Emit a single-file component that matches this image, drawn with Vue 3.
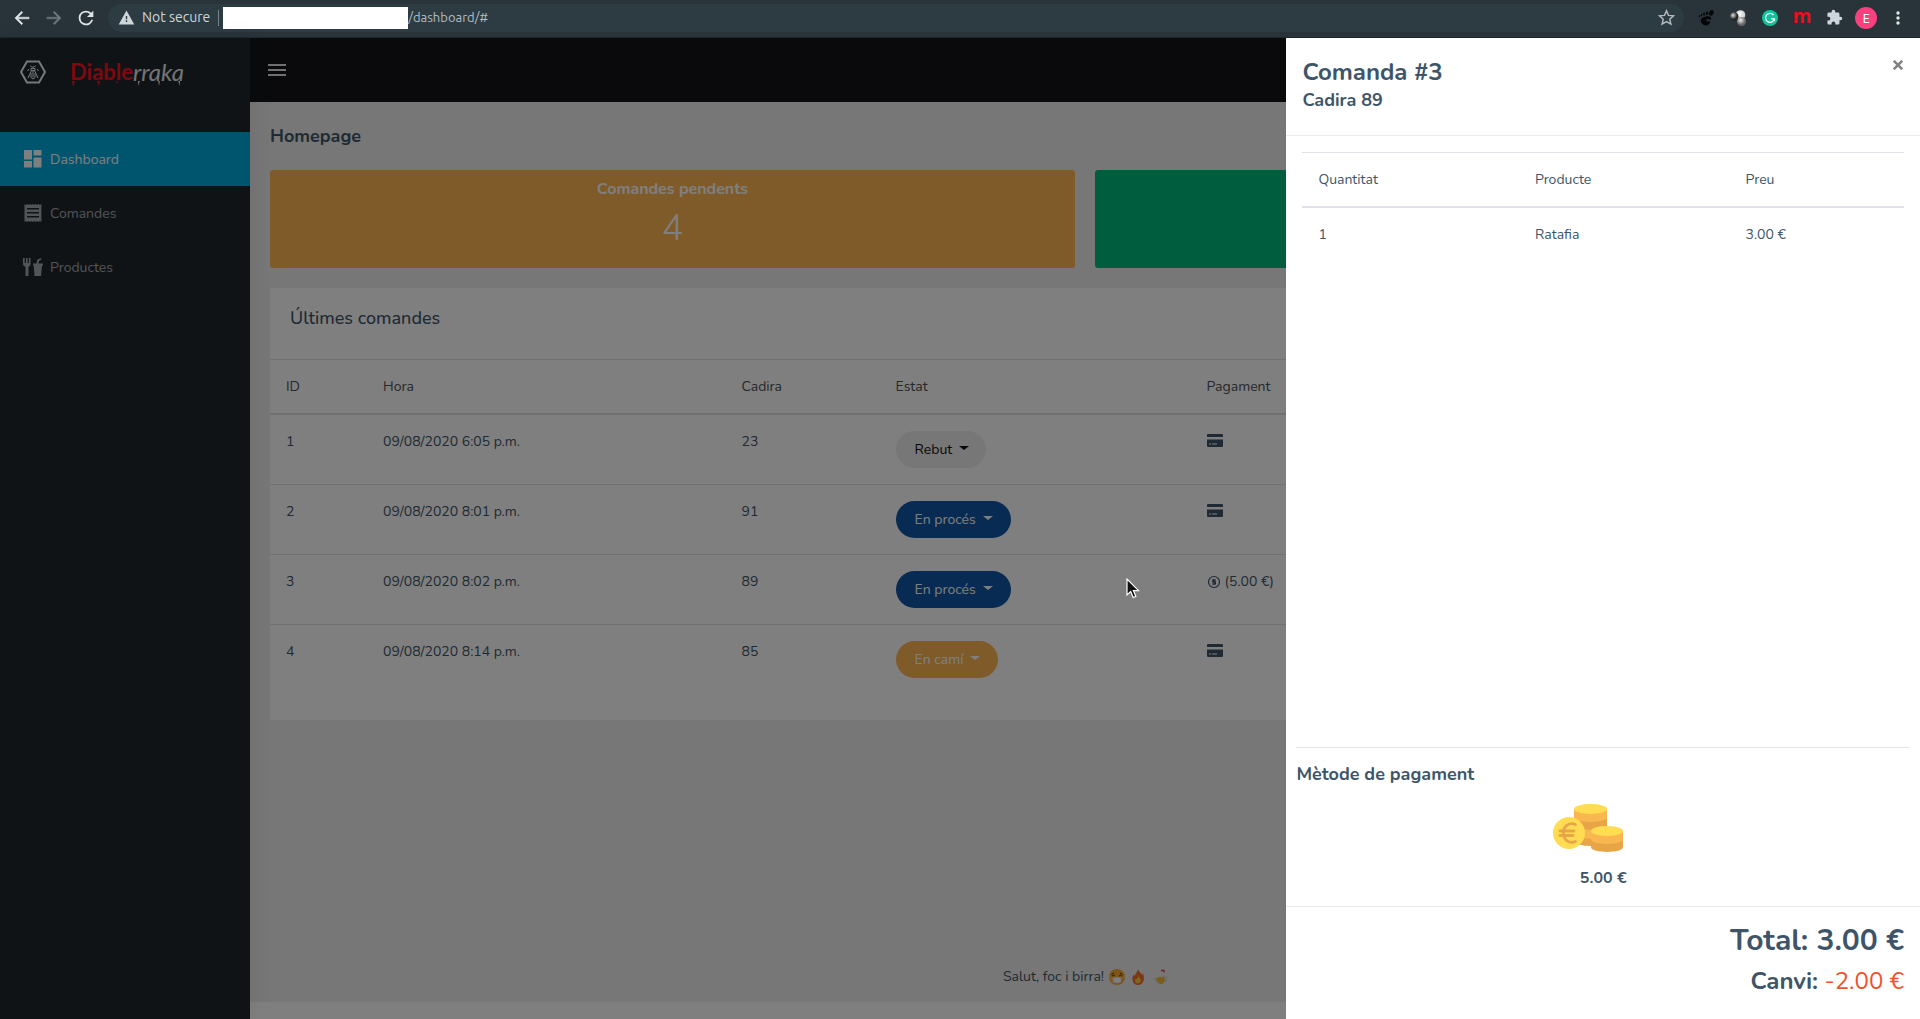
<script setup>
const orders = [
  { id: 1, time: '09/08/2020 6:05 p.m.', seat: 23, state: 'Rebut', tone: 'received' },
  { id: 2, time: '09/08/2020 8:01 p.m.', seat: 91, state: 'En procés', tone: 'progress' },
  { id: 3, time: '09/08/2020 8:02 p.m.', seat: 89, state: 'En procés', tone: 'progress', cash: '(5.00 €)' },
  { id: 4, time: '09/08/2020 8:14 p.m.', seat: 85, state: 'En camí', tone: 'sent' },
]
</script>

<template>
  <div class="window">
    <header class="browser">
      <button class="tool" aria-label="Back">
        <svg viewBox="0 0 24 24" width="20" height="20" fill="#dfe6ea"><path d="M20.500 11H7.300l5.600-5.600L11.500 4l-8 8 8 8 1.400-1.400L7.300 13h13.200z" stroke="#dfe6ea" stroke-width=".6" /></svg>
      </button>
      <button class="tool" aria-label="Forward">
        <svg viewBox="0 0 24 24" width="20" height="20" fill="#6d787e"><path d="M3.500 11h13.200l-5.600-5.600L12.500 4l8 8-8 8-1.400-1.400 5.600-5.600H3.500z" stroke="#6d787e" stroke-width=".6" /></svg>
      </button>
      <button class="tool" aria-label="Reload">
        <svg viewBox="0 0 24 24" width="22" height="22" fill="#dfe6ea"><path d="M17.650 6.350A7.950 7.950 0 0 0 12 4a8 8 0 1 0 7.730 10h-2.080A6 6 0 1 1 12 6c1.660 0 3.140.69 4.220 1.780L13 11h7V4z" /></svg>
      </button>
      <div class="address">
        <svg class="warn" viewBox="0 0 24 24" width="17" height="17" fill="#cfd6da"><path d="M1 22h22L12 2zM13 18.500h-2v-2.500h2zm0-4h-2V10h2z" fill-rule="evenodd" /></svg>
        <span class="insecure">Not secure</span>
        <span class="divider"></span>
        <span class="mask"></span>
        <span class="path">/dashboard/#</span>
        <button class="star" aria-label="Bookmark">
          <svg viewBox="0 0 24 24" width="17" height="17" fill="none" stroke="#b4bcc0" stroke-width="2"><path d="M12 2.500l2.800 6.500 7.200.7-5.400 4.700 1.600 7L12 17.700l-6.200 3.700 1.600-7L2 9.700 9.200 9z" /></svg>
        </button>
      </div>
      <div class="extensions">
        <svg viewBox="0 0 24 24" width="16" height="16" fill="#050607">
          <path d="M11 10c5-1.200 9-.2 8.500 3-.4 2.200-3 2-3.500.8-.6-1.300-3-1-3.300 1.200-.2 2 1.300 3 2.800 2.200 1.500-.8 3.200-.2 2.500 1.600-1 3-4 4.700-7 4.200C7.500 22.500 4.500 19.500 4.200 16c-.2-3 2.500-5.200 6.800-6z" />
          <ellipse cx="20" cy="4.200" rx="3.200" ry="4.400" transform="rotate(25 20 4.200)" /><ellipse cx="13.500" cy="4.800" rx="1.700" ry="2.800" /><ellipse cx="9" cy="6" rx="1.400" ry="2.300" /><ellipse cx="5.200" cy="7.500" rx="1.200" ry="2" /><ellipse cx="2" cy="9.500" rx="1" ry="1.600" />
        </svg>
        <svg viewBox="0 0 16 16" width="16" height="16">
          <defs>
            <radialGradient id="ballDark" cx=".35" cy=".35"><stop offset="0" stop-color="#ddd" /><stop offset="1" stop-color="#222" /></radialGradient>
            <radialGradient id="ballLight" cx=".4" cy=".4"><stop offset="0" stop-color="#fff" /><stop offset="1" stop-color="#d0d0d0" /></radialGradient>
            <radialGradient id="ballGrey" cx=".4" cy=".35"><stop offset="0" stop-color="#eee" /><stop offset="1" stop-color="#666" /></radialGradient>
          </defs>
          <circle cx="10.500" cy="5" r="4.800" fill="url(#ballLight)" /><circle cx="11.500" cy="11.500" r="4.500" fill="url(#ballGrey)" /><circle cx="4.300" cy="6.500" r="4.200" fill="url(#ballDark)" />
        </svg>
        <svg viewBox="0 0 16 16" width="16" height="16"><circle cx="8" cy="8" r="8" fill="#0fc39a" /><path d="M11.500 5A4.500 4.500 0 1 0 12.400 8.900H9M12.400 8.900v2.400" fill="none" stroke="#fff" stroke-width="1.300" /></svg>
        <span class="ext-m">m</span>
        <svg viewBox="0 0 24 24" width="17" height="17" fill="#cdd6dc"><path d="M20.500 11H19V7a2 2 0 0 0-2-2h-4V3.500a2.500 2.500 0 0 0-5 0V5H4a2 2 0 0 0-2 2v3.800h1.500a2.700 2.700 0 0 1 0 5.400H2V20a2 2 0 0 0 2 2h3.800v-1.500a2.700 2.700 0 0 1 5.400 0V22H17a2 2 0 0 0 2-2v-4h1.500a2.500 2.500 0 0 0 0-5z" /></svg>
        <span class="avatar">E</span>
        <svg viewBox="0 0 16 16" width="16" height="16" fill="#dfe6ea"><circle cx="8" cy="3" r="1.700" /><circle cx="8" cy="8" r="1.700" /><circle cx="8" cy="13" r="1.700" /></svg>
      </div>
    </header>

    <div class="app">
      <aside class="sidebar">
        <div class="brand">
          <svg viewBox="0 0 26 24" width="26" height="24" fill="none" stroke="#f0f0f0">
            <path d="M7 1.500h12L25 12l-6 10.500H7L1 12z" stroke-width="2" />
            <path d="M10.500 5.500l1 1.500h3l1-1.500M11 8.500h4v2h-4zM11.500 10.500L8.500 17M14.500 10.500l3 6.500M13 10.500v7M11 13v4.500l2 1.500 2-1.500V13M9 9l-1.500 2M17 9l1.500 2M9 16l-1 2M17 16l1 2" stroke-width="1" />
          </svg>
          <a href="#" class="wordmark">
            <b>Diable</b><i>rraka</i>
            <svg class="drips" viewBox="0 0 114 6" width="114" height="6"><path d="M2 0h3L3 6zM27 0h3l-1 5zM46 0h2l-1 3z" fill="#f5141f" /><path d="M68 0h2l-2 5zM88 0h2l-1 5zM108 0h2v5z" fill="#d8d8d8" /></svg>
          </a>
        </div>
        <nav>
          <a href="#" class="item active">
            <svg viewBox="0 0 18 18" width="18" height="18" fill="currentColor"><path d="M0 0h8v9.500H0zM9.500 0h8v5.500h-8zM0 11h8v6.500H0zM9.500 7.500h8v10h-8z" /></svg>
            Dashboard
          </a>
          <a href="#" class="item">
            <svg viewBox="0 0 18 18" width="18" height="18" fill="currentColor"><path fill-rule="evenodd" d="M.5 0l1.400 1 1.400-1 1.400 1 1.400-1 1.400 1 1.400-1 1.400 1 1.400-1 1.400 1 1.400-1 1.400 1 1.500-1v18l-1.500-1-1.400 1-1.400-1-1.400 1-1.400-1-1.400 1-1.400-1-1.400 1-1.400-1-1.400 1-1.400-1-1.400 1zM3 4v1.500h12V4zm0 4v1.500h12V8zm0 4v1.500h12V12z" /></svg>
            Comandes
          </a>
          <a href="#" class="item">
            <svg class="wide" viewBox="0 0 20 18" width="20" height="18" fill="currentColor"><path d="M0 0h1.700v5h1.200V0h1.700v5h1.200V0h1.700v6c0 1.500-.8 2.300-2 2.800V18H2.500V8.800C1 8.300 0 7.500 0 6zM10 5.500h3.500l.6-3.500L17.500 0l1 1.500-2.500 1.400-.5 2.600H20v2h-1L18 18h-6.500L10.700 7.500H10z" /></svg>
            Productes
          </a>
        </nav>
      </aside>

      <div class="page">
        <div class="topbar">
          <button class="burger" aria-label="Menu"><span></span><span></span><span></span></button>
        </div>
        <main>
          <h1>Homepage</h1>
          <div class="stats">
            <section class="stat pending">
              <h2>Comandes pendents</h2>
              <p>4</p>
            </section>
            <section class="stat done"></section>
          </div>
          <section class="card">
            <h2>Últimes comandes</h2>
            <table class="orders">
              <colgroup><col class="c-id" /><col class="c-time" /><col class="c-seat" /><col class="c-state" /><col /></colgroup>
              <thead>
                <tr><th>ID</th><th>Hora</th><th>Cadira</th><th>Estat</th><th>Pagament</th></tr>
              </thead>
              <tbody>
                <tr v-for="order in orders" :key="order.id">
                  <td>{{ order.id }}</td>
                  <td>{{ order.time }}</td>
                  <td>{{ order.seat }}</td>
                  <td><button class="state" :class="order.tone">{{ order.state }}</button></td>
                  <td>
                    <span v-if="order.cash" class="cash">
                      <svg viewBox="0 0 14 14" width="14" height="14" fill="none" stroke="currentColor"><circle cx="7" cy="7" r="5.500" stroke-width="1.200" /><path d="M9 5H5.800v1.800h2.600V9H5M7 4v6" stroke-width="1.200" /></svg>
                      {{ order.cash }}
                    </span>
                    <svg v-else class="creditcard" viewBox="0 0 16 13" width="16" height="13" fill="currentColor"><path fill-rule="evenodd" d="M1 0h14a1 1 0 0 1 1 1v2H0V1a1 1 0 0 1 1-1zM0 5.500h16V12a1 1 0 0 1-1 1H1a1 1 0 0 1-1-1zM2 9.500v1h2v-1zm3 0v1h5v-1z" /></svg>
                  </td>
                </tr>
              </tbody>
            </table>
          </section>
        </main>
        <footer class="foot">
          <span>Salut, foc i birra!</span>
          <svg viewBox="0 0 16 16" width="16" height="16"><circle cx="8" cy="8" r="8" fill="#ffa82e" /><path d="M2.500 5.500l2.500-1.500M13.500 5.500L11 4M3 7q1.500-1.500 3 0M10 7q1.500-1.500 3 0" stroke="#5b3410" fill="none" /><path d="M4 9q4-1.500 8 0v4q-4 2-8 0zM4 9.500L.5 8M12 9.500L15.500 8" fill="#fff" stroke="#ddd" stroke-width=".8" /></svg>
          <svg viewBox="0 0 16 16" width="16" height="16"><path d="M8 0c.5 3 3.500 3.500 4 6l1-1.500C15 8.500 14 16 8 16S1.500 9 3.500 5.500l.8 2C4.800 5 7.500 3.500 8 0z" fill="#f4702a" /><path d="M8.500 6c0 2.500 2.800 3.500 2.300 6s-5 3.500-5.600.5c-.3-1.500.3-2.500.8-3l.8 1C7.200 9 8.500 8.500 8.500 6z" fill="#ffcf3f" /></svg>
          <svg viewBox="0 0 16 16" width="16" height="16"><path d="M4.500 6.500l8 0 2 5.500-4 3.500-4.500-2z" fill="#f0bd35" /><path d="M0 7l3-4.500 3-1L9 2.500l3 1 1.500 3-2.500 2-2.500-1-2 1.500-1.500-.5L3 9.500z" fill="#eee" /><path d="M13 6.500l2.500 2v3l-2.500 1.500M2.500 9l4.500 5" fill="none" stroke="#d8d8d8" stroke-width="1.300" /><path d="M10 1.500h3v2" fill="none" stroke="#e44" stroke-width="1.300" /></svg>
        </footer>
      </div>

      <div class="backdrop"></div>
      <svg class="pointer" viewBox="0 0 14 21" width="14" height="21"><path d="M1 1v16l3.700-3.400L7.200 19.500l2.700-1.100-2.500-5.700H12.600z" fill="#111" stroke="#fff" stroke-width="1.200" /></svg>

      <aside class="drawer">
        <header>
          <h2>Comanda #3</h2>
          <h3>Cadira 89</h3>
          <button class="close" aria-label="Close">
            <svg viewBox="0 0 10 10" width="10" height="10" stroke="#7f7f7f" stroke-width="2.500"><path d="M.8.8l8.400 8.400M9.200.8L.8 9.200" /></svg>
          </button>
        </header>
        <div class="lines">
          <table>
            <colgroup><col class="c-qty" /><col class="c-product" /><col /></colgroup>
            <thead><tr><th>Quantitat</th><th>Producte</th><th>Preu</th></tr></thead>
            <tbody><tr><td>1</td><td>Ratafia</td><td>3.00 €</td></tr></tbody>
          </table>
        </div>
        <section class="payment">
          <h3>Mètode de pagament</h3>
          <svg viewBox="0 0 70 48" width="70" height="48">
            <path d="M21 5v32q4 5 17 5t16-5V5z" fill="#e8a548" />
            <path d="M21 5v8c0 6.500 33 6.500 33 0V5zM21 24v7q8 4 17 3.500V26z" fill="#f9b84f" />
            <ellipse cx="37.500" cy="5" rx="16.500" ry="5" fill="#ffdc52" />
            <path d="M38 27v16c0 6.500 32 6.500 32 0V27z" fill="#e8a548" />
            <path d="M38 27v8c0 6.500 32 6.500 32 0v-8z" fill="#f9b84f" />
            <ellipse cx="54" cy="27" rx="16" ry="5" fill="#ffdc52" />
            <circle cx="16" cy="29" r="16" fill="#ffdc52" />
            <path d="M22.500 20.500C16 18 10.500 22 10.500 29s5.500 11 12 8.500M7 27h14M7 31.500h13" fill="none" stroke="#e8a548" stroke-width="2.800" stroke-linecap="round" />
          </svg>
          <p>5.00 €</p>
        </section>
        <footer>
          <p class="total">Total: 3.00 €</p>
          <p class="change">Canvi: <span>-2.00 €</span></p>
        </footer>
      </aside>
    </div>
  </div>
</template>

<style>
body { margin: 0; }
</style>

<style scoped>
* { box-sizing: border-box; }
h1, h2, h3, p { margin: 0; }
button { border: 0; padding: 0; background: none; font: inherit; }
a { text-decoration: none; }
svg { display: block; flex: none; }
.window {
  display: flex;
  flex-direction: column;
  min-height: 100vh;
  font-family: Nunito, Lato, sans-serif;
  font-size: 14px;
  line-height: 21px;
  color: #3e5569;
}

.browser {
  display: flex;
  align-items: center;
  height: 38px;
  padding: 0 6px 2px;
  background: #28343a;
  border-bottom: 1px solid #1d272c;
  font-family: Ubuntu, "Noto Sans", sans-serif;
  font-size: 14px;
}
.tool { display: grid; place-items: center; width: 32px; height: 28px; }
.address {
  flex: 1;
  display: flex;
  align-items: center;
  height: 28px;
  margin-left: 6px;
  padding: 0 9px 0 10px;
  border-radius: 14px;
  background: #2d3c43;
  color: #b4bcc0;
}
.insecure { margin-left: 7px; color: #cfd6da; }
.divider { width: 1px; height: 16px; margin: 0 4px 0 8px; background: #77828a; }
.mask { width: 185px; height: 22px; background: #fff; }
.path { font-size: 13px; }
.star { margin-left: auto; }
.extensions { display: grid; grid-template-columns: repeat(7, 32px); place-items: center; margin-left: 6px; height: 28px; }
.ext-m { font: bold 19px/20px "Open Sans", sans-serif; color: #f00c1e; height: 24px; }
.avatar { width: 22px; height: 22px; border-radius: 50%; background: #f9407e; color: #fff; font: 13px/22px "Open Sans", sans-serif; text-align: center; }

.app { position: relative; flex: 1; display: flex; }
.sidebar { width: 250px; background: #1f262d; box-shadow: 1px 0 20px rgba(0, 0, 0, .08); z-index: 1; }
.brand { display: flex; align-items: center; height: 64px; padding: 3px 20px 0; gap: 24px; }
.wordmark { position: relative; display: flex; font: 24px/30px Lato, "Liberation Sans", sans-serif; color: #e8e8e8; }
.wordmark b { color: #f5141f; font-size: 22px; }
.drips { position: absolute; left: 0; bottom: 0; }
nav { padding-top: 30px; }
.item { display: flex; align-items: center; gap: 8px; height: 54px; padding-left: 24px; color: #a5a8ab; }
.item.active { background: #00aadd; color: #fff; }
.item .wide { margin: 0 -1px; }

.page { flex: 1; display: flex; flex-direction: column; background: #eee; border-bottom: 17px solid #fff; }
.topbar { height: 64px; padding: 26px 18px; background: #141518; }
.burger { display: flex; flex-direction: column; gap: 3px; }
.burger span { width: 18px; height: 2px; background: #e0e0e0; }
main { padding: 20px; }
h1 { font-size: 18px; line-height: 28px; font-weight: 700; }
.stats { display: grid; grid-template-columns: 1fr 1fr; gap: 20px; margin-top: 20px; }
.stat { height: 98px; padding-top: 8px; border-radius: 3px; text-align: center; color: #fff; }
.stat h2 { font-size: 16px; line-height: 22px; font-weight: 700; }
.stat p { font-size: 36px; line-height: 58px; font-weight: 300; }
.pending { background: #ffb654; }
.done { background: #00ba7b; }
.card { margin-top: 20px; padding-bottom: 26px; background: #fff; }
.card h2 { padding: 16px 20px 27px; font-size: 18px; line-height: 28px; font-weight: 500; }
table { width: 100%; border-collapse: separate; border-spacing: 0; table-layout: fixed; }
th, td { padding: 16px; border-top: 1px solid #dee2e6; text-align: left; vertical-align: top; font-weight: 400; }
th { border-bottom: 2px solid #dee2e6; }
.orders th { color: #4f5052; }
tbody tr:first-child td { border-top: 0; }
.c-id { width: 97px; }
.c-time { width: 22%; }
.c-seat { width: 154px; }
.c-state { width: 311px; }
.state { display: flex; align-items: center; height: 37px; padding: 0 18px 0 19px; border-radius: 19px; color: #fff; }
.state::after { content: ""; margin: -3px 0 0 7px; border: 5px solid transparent; border-top: 4px solid currentColor; border-bottom: 0; }
.received { padding-right: 17px; background: #eee; color: #111; }
.progress { background: #0e56a6; }
.sent { background: #ffb654; }
.creditcard { margin-top: 3px; }
.cash { display: flex; align-items: center; gap: 4px; }
.foot { display: flex; justify-content: center; align-items: center; gap: 5px; margin-top: auto; padding-bottom: 15px; }

.backdrop { position: absolute; inset: 0; background: rgba(0, 0, 0, .5); z-index: 2; }
.pointer { position: absolute; left: 1126px; top: 540px; z-index: 3; }
.drawer {
  position: absolute;
  top: 0;
  right: 0;
  bottom: 0;
  z-index: 4;
  display: flex;
  flex-direction: column;
  width: 33%;
  background: #fff;
}
.drawer header { position: relative; height: 98px; padding: 18px 16px; border-bottom: 1px solid #e9ecef; }
.drawer header h2 { font-size: 24px; line-height: 32px; }
.drawer h3 { font-size: 18px; line-height: 24px; }
.close { position: absolute; top: 22px; right: 17px; }
.lines { flex: 1; padding: 16px; }
.c-qty { width: 36%; }
.c-product { width: 35%; }
.payment { margin: 0 10px; padding-top: 14px; border-top: 1px solid #e3e6e9; }
.payment svg { margin: 18px auto 14px; position: relative; left: -15px; }
.payment p { font-size: 16px; line-height: 24px; font-weight: 700; text-align: center; padding-bottom: 16px; }
.drawer footer { padding: 14px 16px 18px; border-top: 1px solid #e9ecef; text-align: right; }
.total { font-size: 30px; line-height: 40px; font-weight: 700; }
.change { font-size: 24px; line-height: 40px; font-weight: 700; }
.change span { font-weight: 400; color: #f0512d; }
</style>
